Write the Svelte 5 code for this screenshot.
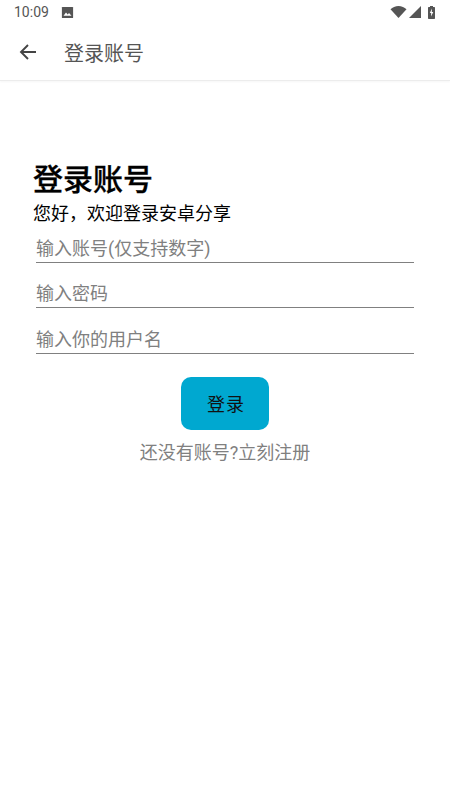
<script>
  let account = ''
  let password = ''
  let username = ''
</script>

<div class="page">
  <div class="status-bar">
    <span class="time">10:09</span>
    <svg class="pic" width="13" height="13" viewBox="0 0 13 13">
      <path fill="#555" d="M1.500 1h10a.6.6 0 0 1 .6.6v9.800a.6.6 0 0 1-.6.6h-10a.6.6 0 0 1-.6-.6V1.600a.6.6 0 0 1 .6-.6z"/>
      <path fill="#fff" d="M2.500 9.800 5 6.500l1.700 2 1.300-1.400 2.500 2.700z"/>
    </svg>
    <span class="spacer"></span>
    <svg width="17" height="12" viewBox="0 0 16 12">
      <path fill="#555" d="M0 3.200C2 1.300 4.900 0 8 0s6 1.300 8 3.200L8 12z"/>
    </svg>
    <svg class="signal" width="12" height="12" viewBox="0 0 12 12">
      <path fill="#555" d="M12 0v12H0z"/>
    </svg>
    <svg class="battery" width="7" height="13" viewBox="0 0 7 13">
      <path fill="#555" d="M2 0h3v1h1.300a.7.7 0 0 1 .7.7v10.600a.7.7 0 0 1-.7.7H.7a.7.7 0 0 1-.7-.7V1.700A.7.7 0 0 1 .7 1H2z"/>
      <path fill="#fff" d="M4 2.500 1.800 7H3.200L3 10.500 5.300 6H3.800z"/>
    </svg>
  </div>

  <header class="toolbar">
    <button class="back" aria-label="返回">
      <svg width="18" height="18" viewBox="0 0 18 18">
        <path fill="none" stroke="#444" stroke-width="1.900" d="M17 9H2.500M9 2 2 9l7 7"/>
      </svg>
    </button>
    <span class="toolbar-title">登录账号</span>
  </header>

  <main class="content">
    <h1>登录账号</h1>
    <p class="welcome">您好，欢迎登录安卓分享</p>

    <form class="fields" on:submit|preventDefault>
      <input type="text" placeholder="输入账号(仅支持数字)" bind:value={account} />
      <input type="password" placeholder="输入密码" bind:value={password} />
      <input type="text" placeholder="输入你的用户名" bind:value={username} />
      <button class="login" type="submit">登录</button>
    </form>

    <p class="register">还没有账号?立刻注册</p>
  </main>
</div>

<style>
  :global(body) {
    margin: 0;
    background: #fff;
  }

  .page {
    width: 450px;
    height: 800px;
    overflow: hidden;
    background: #fff;
    font-family: Roboto, "Noto Sans CJK SC", sans-serif;
  }

  .status-bar {
    height: 24px;
    display: flex;
    align-items: center;
    padding: 0 15px 0 14px;
    gap: 2px;
  }

  .time {
    font-size: 14px;
    color: #555;
    margin-right: 10px;
  }

  .battery {
    margin-left: 5px;
  }

  .spacer {
    flex: 1;
  }

  .toolbar {
    height: 56px;
    display: flex;
    align-items: center;
    border-bottom: 1px solid #ececec;
    box-shadow: 0 1px 2px rgba(0, 0, 0, 0.04);
  }

  .back {
    border: 0;
    background: none;
    padding: 0;
    margin-left: 19px;
    width: 18px;
    height: 18px;
  }

  .toolbar-title {
    margin-left: 27px;
    font-size: 20px;
    color: #555;
  }

  .content {
    display: flex;
    flex-direction: column;
    padding-top: 80px;
  }

  h1 {
    margin: 0 0 0 33px;
    font-size: 30px;
    line-height: 38px;
    font-weight: 500;
    -webkit-text-stroke: 0.3px #000;
    color: #000;
  }

  .welcome {
    margin: 3px 0 0 33px;
    font-size: 18px;
    line-height: 24px;
    color: #000;
  }

  .fields {
    display: flex;
    flex-direction: column;
    align-items: center;
    margin-top: 9px;
  }

  input {
    box-sizing: border-box;
    width: 378px;
    height: 46px;
    margin-top: -0.5px;
    padding: 18px 0 0;
    border: 0;
    border-bottom: 1.5px solid #808080;
    outline: none;
    background: none;
    font-family: inherit;
    font-size: 18px;
    color: #222;
  }

  input:first-child {
    height: 28px;
    padding-top: 0;
  }

  input::placeholder {
    color: #808080;
    opacity: 1;
  }

  .login {
    width: 88px;
    height: 53px;
    margin-top: 23px;
    border: 0;
    border-radius: 10px;
    background: #00a8d0;
    color: #111;
    font-family: inherit;
    font-size: 18px;
    letter-spacing: 1px;
    padding-left: 8px;
  }

  .register {
    margin: 10px 0 0;
    text-align: center;
    font-size: 18px;
    line-height: 26px;
    color: #808080;
  }
</style>
